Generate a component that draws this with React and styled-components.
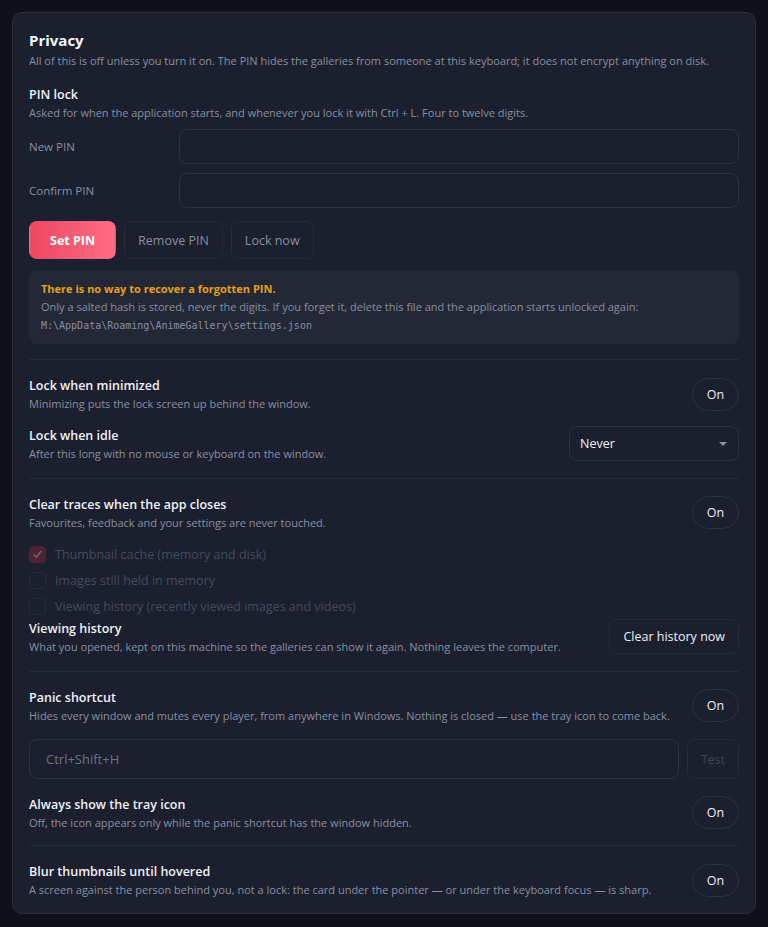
import React from 'react'
import styled, { createGlobalStyle } from 'styled-components'

const GlobalStyle = createGlobalStyle`
    html, body {
        margin: 0;
        background: #0e1119;
    }
    body {
        font-family: 'Open Sans', 'Noto Sans', sans-serif;
        color: #e8ebf2;
    }
`

const Page = styled.div`
    padding: 12px 12px 14px 12px;
`
const Card = styled.div`
    background: #1b1f2e;
    border: 1px solid #2a2f3e;
    border-radius: 10px;
    padding: 17px 16px 14px 16px;
`
const Title = styled.div`
    font-size: 15px;
    font-weight: 700;
    line-height: 20px;
    color: #f4f6fa;
`
const Name = styled.div`
    font-size: 12.5px;
    font-weight: 600;
    line-height: 18px;
    color: #f0f2f7;
`
const Desc = styled.div`
    font-size: 11px;
    line-height: 18px;
    color: #8890a2;
`
const Block = styled.div`
    margin-top: ${p => p.$top || 0}px;
`
const FieldRow = styled.div`
    display: flex;
    align-items: center;
    gap: ${p => p.$gap || 0}px;
    margin-top: ${p => p.$top || 0}px;
`
const FieldLabel = styled.div`
    width: 150px;
    font-size: 11.5px;
    color: #8890a2;
`
const Input = styled.div`
    flex: 1;
    height: ${p => p.$h || 35}px;
    box-sizing: border-box;
    border: 1px solid #2c3243;
    border-radius: 8px;
    background: #1b1f2e;
    display: flex;
    align-items: center;
    padding-left: 16px;
    font-size: 13px;
    color: #6b7386;
`
const Buttons = styled.div`
    display: flex;
    gap: 8px;
    margin-top: 13px;
`
const Button = styled.div`
    height: ${p => p.$h || 38}px;
    box-sizing: border-box;
    padding: 0 ${p => p.$px || 15}px;
    display: flex;
    align-items: center;
    justify-content: center;
    border-radius: 8px;
    font-size: 12.5px;
    border: 1px solid ${p => p.$primary ? 'transparent' : '#262b3a'};
    background: ${p => p.$primary ? 'linear-gradient(90deg, #eb4862, #ff6c84)' : '#1b1f2e'};
    color: ${p => p.$primary ? '#fff' : p.$dim ? '#3d4455' : p.$bright ? '#eef0f5' : '#8890a2'};
    font-weight: ${p => p.$primary ? 700 : 400};
    flex-shrink: 0;
`
const Notice = styled.div`
    margin-top: 11px;
    background: #232736;
    border-radius: 8px;
    padding: 10px 12px 8px 12px;
    font-size: 11px;
    line-height: 18px;
    color: #8890a2;
`
const Warn = styled.div`
    color: #e6a019;
    font-weight: 700;
`
const Mono = styled.div`
    font-family: 'DejaVu Sans Mono', 'Liberation Mono', monospace;
    font-size: 10px;
    line-height: 20px;
`
const Divider = styled.div`
    height: 1px;
    background: #272c3b;
    margin: ${p => p.$above || 15}px 0 ${p => p.$below || 17}px;
`
const SettingRow = styled.div`
    display: flex;
    align-items: flex-start;
    justify-content: space-between;
    margin-top: ${p => p.$top || 0}px;
`
const Control = styled.div`
    margin-top: ${p => p.$nudge || 0}px;
    flex-shrink: 0;
`
const Toggle = styled.div`
    width: 47px;
    height: 33px;
    box-sizing: border-box;
    border: 1px solid #2c3243;
    border-radius: 17px;
    display: flex;
    align-items: center;
    justify-content: center;
    font-size: 12.5px;
    color: #eef0f5;
`
const Select = styled.div`
    width: 170px;
    height: 35px;
    box-sizing: border-box;
    border: 1px solid #2c3243;
    border-radius: 8px;
    display: flex;
    align-items: center;
    justify-content: space-between;
    padding: 0 11px 0 10px;
    font-size: 12.5px;
    color: #eef0f5;
    &::after {
        content: '';
        border-left: 4px solid transparent;
        border-right: 4px solid transparent;
        border-top: 4px solid #8890a2;
    }
`
const Checks = styled.div`
    margin-top: 14px;
    display: flex;
    flex-direction: column;
    gap: 9px;
`
const Check = styled.div`
    display: flex;
    align-items: center;
    gap: 9px;
    font-size: 12.5px;
    color: #444b5c;
    height: 17px;
`
const Box = styled.div`
    width: 17px;
    height: 17px;
    box-sizing: border-box;
    border-radius: 4px;
    border: 1px solid ${p => p.$on ? '#4b2434' : '#262b3a'};
    background: ${p => p.$on ? '#4b2434' : 'transparent'};
    display: flex;
    align-items: center;
    justify-content: center;
`

function Setting({ name, desc, children, top, nudge }) {
    return (
        <SettingRow $top={top}>
            <div>
                <Name>{name}</Name>
                <Desc>{desc}</Desc>
            </div>
            <Control $nudge={nudge}>{children}</Control>
        </SettingRow>
    )
}

export default function App() {
    return (
        <Page>
            <GlobalStyle />
            <Card>
                <Title>Privacy</Title>
                <Desc style={{ marginTop: 2 }}>All of this is off unless you turn it on. The PIN hides the galleries from someone at this keyboard; it does not encrypt anything on disk.</Desc>
                <Block $top={16}>
                    <Name>PIN lock</Name>
                    <Desc>Asked for when the application starts, and whenever you lock it with Ctrl + L. Four to twelve digits.</Desc>
                </Block>
                <FieldRow $top={7}>
                    <FieldLabel>New PIN</FieldLabel>
                    <Input />
                </FieldRow>
                <FieldRow $top={9}>
                    <FieldLabel>Confirm PIN</FieldLabel>
                    <Input />
                </FieldRow>
                <Buttons>
                    <Button $primary $px={20}>Set PIN</Button>
                    <Button $px={13}>Remove PIN</Button>
                    <Button $px={13}>Lock now</Button>
                </Buttons>
                <Notice>
                    <Warn>There is no way to recover a forgotten PIN.</Warn>
                    <div>Only a salted hash is stored, never the digits. If you forget it, delete this file and the application starts unlocked again:</div>
                    <Mono>M:\AppData\Roaming\AnimeGallery\settings.json</Mono>
                </Notice>

                <Divider $above={15} />
                <Setting nudge={1} name="Lock when minimized" desc="Minimizing puts the lock screen up behind the window.">
                    <Toggle>On</Toggle>
                </Setting>
                <Setting top={14} nudge={-1} name="Lock when idle" desc="After this long with no mouse or keyboard on the window.">
                    <Select>Never</Select>
                </Setting>

                <Divider />
                <Setting name="Clear traces when the app closes" desc="Favourites, feedback and your settings are never touched.">
                    <Toggle>On</Toggle>
                </Setting>
                <Checks>
                    <Check>
                        <Box $on>
                            <svg width="11" height="11" viewBox="0 0 12 12">
                                <path d="M2.2 6.4 L4.8 9 L9.8 2.6" fill="none" stroke="#80566a" strokeWidth="1.8" strokeLinecap="round" strokeLinejoin="round" />
                            </svg>
                        </Box>
                        Thumbnail cache (memory and disk)
                    </Check>
                    <Check><Box />Images still held in memory</Check>
                    <Check><Box />Viewing history (recently viewed images and videos)</Check>
                </Checks>
                <Setting top={5} nudge={-1} name="Viewing history" desc="What you opened, kept on this machine so the galleries can show it again. Nothing leaves the computer.">
                    <Button $h={35} $bright $px={13}>Clear history now</Button>
                </Setting>

                <Divider />
                <Setting name="Panic shortcut" desc="Hides every window and mutes every player, from anywhere in Windows. Nothing is closed — use the tray icon to come back.">
                    <Toggle>On</Toggle>
                </Setting>
                <FieldRow $top={14} $gap={8}>
                    <Input $h={40}>Ctrl+Shift+H</Input>
                    <Button $h={40} $dim $px={13}>Test</Button>
                </FieldRow>
                <Setting top={17} name="Always show the tray icon" desc="Off, the icon appears only while the panic shortcut has the window hidden.">
                    <Toggle>On</Toggle>
                </Setting>

                <Divider $above={13} />
                <Setting nudge={1} name="Blur thumbnails until hovered" desc="A screen against the person behind you, not a lock: the card under the pointer — or under the keyboard focus — is sharp.">
                    <Toggle>On</Toggle>
                </Setting>
            </Card>
        </Page>
    )
}
